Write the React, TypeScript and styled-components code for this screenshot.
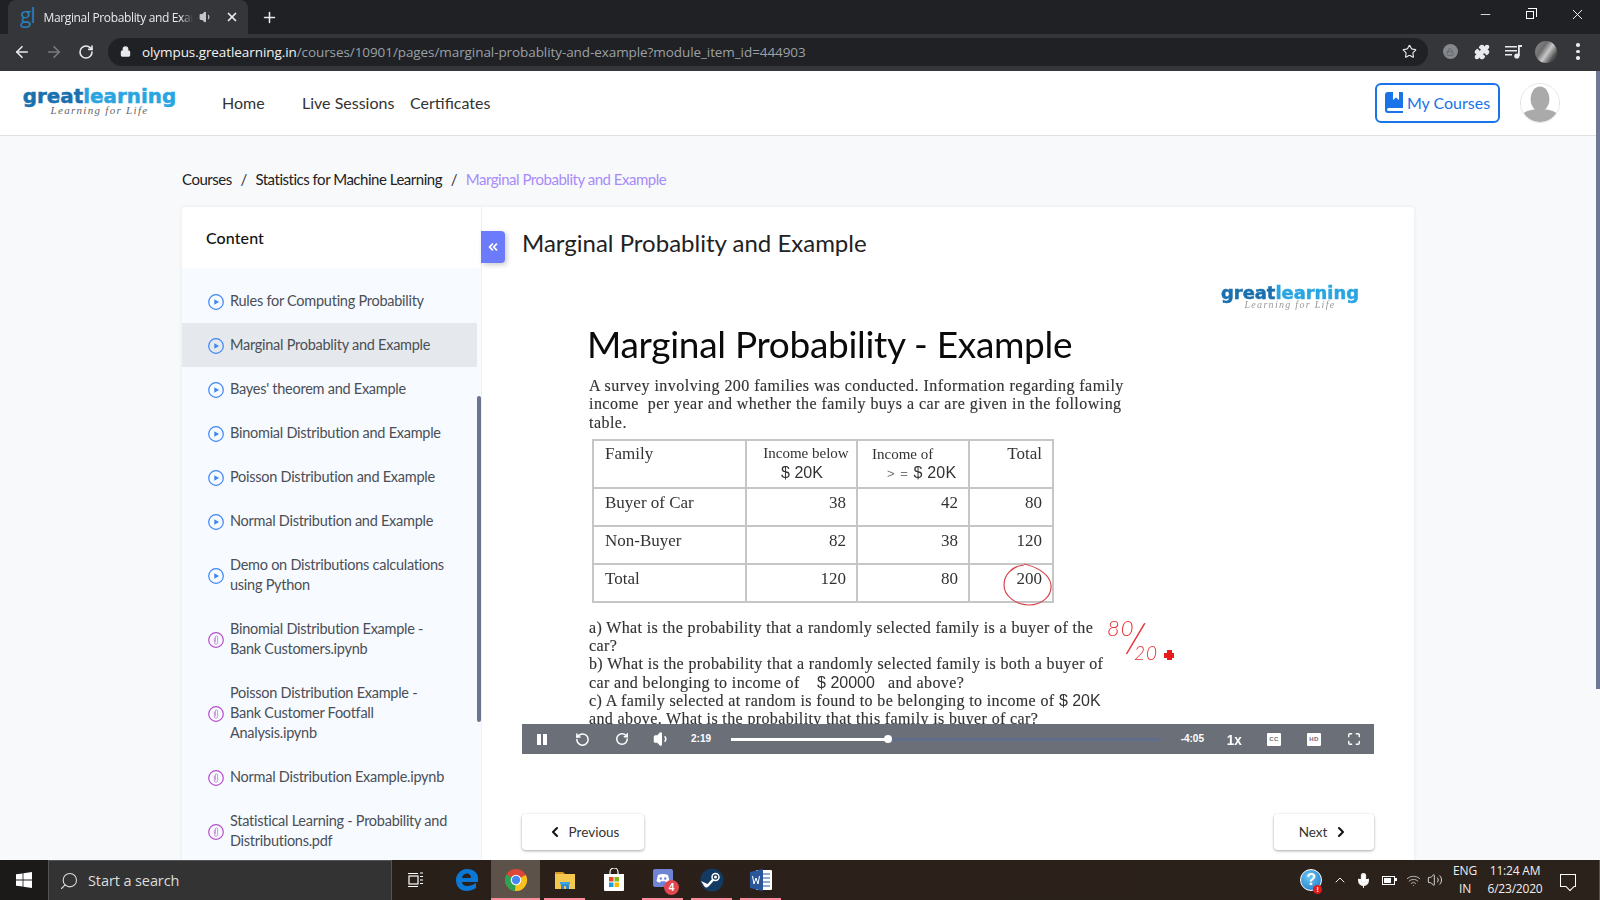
import React from 'react';
import styled, { createGlobalStyle } from 'styled-components';
import { ArrowLeft, ArrowRight, RotateCw, RotateCcw, Lock, Star, Puzzle, X, Plus, Minus, ChevronLeft, ChevronRight, ChevronsLeft, ChevronUp, Search, Mic, Volume1, Volume2, Wifi, Maximize } from 'lucide-react';

const Global = createGlobalStyle`
  html, body { margin: 0; padding: 0; width: 100%; height: 100%; overflow: hidden; }
  * { box-sizing: border-box; }
  body { font-family: Lato, "Liberation Sans", sans-serif; }
`;

const Root = styled.div`
  width: 1600px; height: 900px; display: flex; flex-direction: column; overflow: hidden; position: relative; background: #f8f9fb;
`;

/* ---------- Browser chrome ---------- */
const TabStrip = styled.div`
  height: 34px; background: #202124; display: flex; align-items: stretch; padding-left: 8px; flex: none;
`;
const Tab = styled.div`
  width: 240px; background: #35363a; border-radius: 8px 8px 0 0; display: flex; align-items: center; padding: 0 9px 0 12px; color: #e8eaed;
`;
const Favicon = styled.span`
  font: 400 21px/1 "Open Sans", sans-serif; color: #2a7fb5; width: 24px; margin-top: -3px; letter-spacing: -1px;
`;
const TabTitle = styled.span`
  font: 12px "Open Sans", sans-serif; width: 153px; white-space: nowrap; overflow: hidden; letter-spacing: -0.35px;
  -webkit-mask-image: linear-gradient(90deg, #000 92%, transparent);
`;
const TabIcons = styled.span`
  display: flex; align-items: center; gap: 12px; margin-left: 6px; color: #c4c7ca;
`;
const NewTab = styled.span`
  display: flex; align-items: center; margin-left: 13px; color: #e8eaed;
`;
const WindowControls = styled.div`
  margin-left: auto; display: flex; color: #fff;
`;
const WindowBtn = styled.span`
  width: 46px; height: 28px; display: flex; align-items: center; justify-content: center;
`;
const RestoreGlyph = styled.span`
  width: 8px; height: 8px; border: 1px solid #fff; position: relative; margin-top: 2px; margin-left: -2px;
  &::after { content: ''; position: absolute; top: -4px; right: -4px; width: 8px; height: 8px; border-top: 1px solid #fff; border-right: 1px solid #fff; }
`;
const Toolbar = styled.div`
  height: 37px; background: #35363a; display: flex; align-items: center; flex: none; padding-bottom: 2px;
`;
const ToolBtn = styled.span<{ $dim?: boolean }>`
  width: 32px; height: 32px; display: flex; align-items: center; justify-content: center; color: ${p => (p.$dim ? '#7a7c80' : '#e8eaed')};
`;
const NavBtns = styled.div`
  display: flex; padding-left: 6px; width: 108px;
`;
const UrlBar = styled.div`
  width: 1320px; height: 28px; border-radius: 14px; background: #202124; display: flex; align-items: center; padding-left: 12px; color: #e8eaed;
`;
const Url = styled.span`
  margin-left: 11px; font: 13.5px "Open Sans", sans-serif; white-space: nowrap; letter-spacing: -0.08px; color: #f1f3f4;
  & > span { color: #9aa0a6; }
`;
const UrlStar = styled.span`
  margin-left: auto; margin-right: 11px; display: flex; color: #e8eaed;
`;
const ExtIcons = styled.div`
  display: flex; margin-left: 6px;
`;
const ExtLock = styled.span`
  width: 15px; height: 15px; border-radius: 50%; background: #85888c; display: flex; align-items: center; justify-content: center; color: #5d6064;
`;
const ProfilePic = styled.span`
  width: 22px; height: 22px; border-radius: 50%; background: linear-gradient(125deg, #8c8c8c 0%, #6e6e6e 35%, #c8c8c8 55%, #4e4e4e 80%);
`;
const Dots = styled.span`
  display: flex; flex-direction: column; gap: 3px;
  & > i { width: 3.5px; height: 3.5px; border-radius: 50%; background: #e8eaed; display: block; }
`;

/* ---------- Site ---------- */
const Page = styled.div`
  flex: 1; min-height: 0; overflow: hidden; display: flex; flex-direction: column; background: #f8f9fb;
`;
const SiteNav = styled.header`
  height: 65px; flex: none; background: #fff; border-bottom: 1px solid #e0e1e3; display: flex; align-items: center; padding: 0 40px 0 24px;
`;
const Logo = styled.div<{ $small?: boolean }>`
  display: flex; flex-direction: column; align-items: center; width: ${p => (p.$small ? '136px' : '151px')}; margin-top: ${p => (p.$small ? '0' : '-2px')};
`;
const LogoWord = styled.div<{ $small?: boolean }>`
  font: 700 ${p => (p.$small ? '17.9px' : '19.9px')}/${p => (p.$small ? '12.5px' : '17px')} "DejaVu Sans", sans-serif; color: #1a70ae; white-space: nowrap; -webkit-text-stroke: .5px currentColor;
  & > span { color: #29a5e1; }
`;
const LogoTag = styled.div<{ $small?: boolean }>`
  font: italic ${p => (p.$small ? '10px' : '11px')}/${p => (p.$small ? '10px' : '11px')} "Liberation Serif", serif; color: ${p => (p.$small ? '#999' : '#666')}; letter-spacing: 1.3px; white-space: nowrap;
`;
const NavLinks = styled.nav`
  display: flex; margin: -2px 0 0 47px; font-size: 16px; color: #333;
`;
const NavLink = styled.a<{ $w: number }>`
  width: ${p => p.$w}px; white-space: nowrap;
`;
const MyCourses = styled.button`
  margin-left: auto; width: 125px; height: 40px; border: 2px solid #1a73e8; border-radius: 6px; background: #fff; color: #1a73e8; font: 16px Lato, sans-serif; display: flex; align-items: center; justify-content: center; gap: 3px; padding: 0 0 2px;
`;
const Avatar = styled.span`
  margin-left: 20px; width: 40px; height: 40px; border-radius: 50%; border: 1px solid #e3e3e3; overflow: hidden; display: block;
`;
const Breadcrumb = styled.div`
  height: 71px; flex: none; display: flex; align-items: center; padding: 15px 0 0 182px; font-size: 15px; letter-spacing: -0.48px; color: #222;
  & > i { font-style: normal; margin: 0 8.7px; color: #333; }
  & > b { font-weight: 400; color: #a78bfa; }
`;
const Card = styled.div`
  margin-left: 182px; width: 1232px; flex: none; height: 720px; background: #fff; border-radius: 4px; box-shadow: 0 0 4px rgba(0,0,0,.07); display: flex; position: relative;
`;
const Sidebar = styled.aside`
  width: 300px; flex: none; display: flex; flex-direction: column; border-right: 1px solid #eef0f3;
`;
const SideHead = styled.div`
  height: 61px; flex: none; padding: 12px 24px 0; font-size: 16px; line-height: 37px; font-weight: 500; color: #111; letter-spacing: .1px;
`;
const SideList = styled.div`
  flex: 1; background: #f7faff; padding-top: 11px; position: relative; padding-right: 4px;
`;
const SideScroll = styled.span`
  position: absolute; right: 0; top: 128px; width: 4px; height: 326px; background: #6a7590; border-radius: 2px;
`;
const SideRow = styled.div<{ $active?: boolean }>`
  display: flex; align-items: center; padding: 12px 24px 12px 26px; gap: 6px; background: ${p => (p.$active ? '#e5e8ec' : 'transparent')}; font-size: 14.5px; line-height: 20px; color: #4a4f57; letter-spacing: -0.26px;
  & > svg { flex: none; margin-top: 2px; }
`;
const Collapse = styled.span`
  position: absolute; left: 299px; top: 24px; width: 24px; height: 32px; background: #6b7bfb; border-radius: 0 4px 4px 0; box-shadow: 2px 2px 5px rgba(0,0,0,.2); color: #fff; display: flex; align-items: center; justify-content: center;
`;
const Main = styled.main`
  flex: 1; min-width: 0; padding: 0 40px;
`;
const Title = styled.h1`
  margin: 0; padding-top: 19px; font-size: 24px; line-height: 34px; font-weight: 400; color: #222; height: 63px;
`;
const Video = styled.div`
  width: 852px; height: 484px; display: flex; flex-direction: column; background: #fff; position: relative;
`;
const Slide = styled.div`
  flex: 1; min-height: 0; overflow: hidden; padding: 17px 16px 0 67px; position: relative; filter: blur(0.35px);
`;
const SlideLogoRow = styled.div`
  display: flex; justify-content: flex-end; height: 24px;
`;
const SlideTitle = styled.div`
  font: 37px/42px Lato, sans-serif; color: #0a0a0a; margin-top: 12px; letter-spacing: -0.3px; white-space: nowrap; margin-left: -2px;
`;
const SlideText = styled.div`
  margin-top: 12px; font: 16px/18.3px "Liberation Serif", serif; color: #333; letter-spacing: .46px; -webkit-text-stroke: .15px #333; white-space: nowrap;
`;
const SlideQuestions = styled(SlideText)`
  margin-top: 16px; letter-spacing: .37px;
`;
const Sans = styled.span`
  font-family: "Liberation Sans", sans-serif; letter-spacing: 0; -webkit-text-stroke: 0;
`;
const DataTable = styled.table`
  border-collapse: collapse; margin: 7px 0 0 3px; width: 460px; table-layout: fixed; font: 17px/18px "Liberation Serif", serif; color: #333;
  td { border: 2px solid #c6c6c6; padding: 4px 10px 0 11px; vertical-align: top; }
  tr:not(:first-child) td { padding-top: 5px; }
  td:not(:first-child) { text-align: right; }
`;
const HeadBelow = styled.div`
  font-size: 15px; line-height: 18px; text-align: center; white-space: nowrap; margin: -1px -10px 0 -2px;
  & > span { font: 16px "Liberation Sans", sans-serif; display: block; margin: 2px 8px 0 0; }
`;
const HeadOf = styled.div`
  font-size: 15px; line-height: 18px; text-align: left; white-space: nowrap; margin: 0 -6px 0 3px;
  & > span { font: 16px "Liberation Sans", sans-serif; display: block; margin: 1px 0 0 15px; letter-spacing: .2px; }
  & > span > em { font-style: normal; font-size: 13px; color: #777; letter-spacing: 1px; }
`;
const Row = styled.tr<{ $h: number }>`
  height: ${p => p.$h}px;
`;
const Circle = styled.svg`
  position: absolute; left: 480px; top: 293px;
`;
const Annot = styled.span<{ $x: number; $y: number; $size: number; $rot?: number }>`
  position: absolute; left: ${p => p.$x}px; top: ${p => p.$y}px; font: italic 300 ${p => p.$size}px/1 Lato, sans-serif; color: #e8353b; transform: rotate(${p => p.$rot ?? 0}deg); letter-spacing: 1px;
`;
const Cursor = styled.span`
  position: absolute; left: 642px; top: 380px; width: 10px; height: 10px; background: linear-gradient(#e81c1c,#e81c1c) center/10px 5px no-repeat, linear-gradient(#e81c1c,#e81c1c) center/5px 10px no-repeat;
`;
const Controls = styled.div`
  height: 30px; flex: none; background: #6b7078; color: #fff; display: flex; align-items: center;
`;
const Ctl = styled.span`
  width: 40px; height: 30px; display: flex; align-items: center; justify-content: center; flex: none;
`;
const PauseBars = styled.span`
  width: 10px; height: 11px; border-left: 4px solid #fff; border-right: 4px solid #fff;
`;
const Time = styled.span<{ $right?: boolean }>`
  font: 700 10px "Liberation Sans", sans-serif; width: ${p => (p.$right ? '53px' : '40px')}; margin-left: ${p => (p.$right ? '0' : '9px')}; text-align: ${p => (p.$right ? 'right' : 'left')}; padding-right: ${p => (p.$right ? '10px' : '0')}; flex: none; margin-top: -2px;
`;
const Track = styled.div`
  flex: 1; height: 3px; background: #5f6d8a; position: relative;
`;
const Played = styled.div`
  height: 3px; background: #fff; position: relative;
  &::after { content: ''; position: absolute; right: -4px; top: -2.5px; width: 8px; height: 8px; border-radius: 50%; background: #fff; }
`;
const Speed = styled.span`
  font: 700 15px "Liberation Sans", sans-serif; transform: scaleX(.9);
`;
const Badge = styled.span`
  width: 14px; height: 13px; background: #fff; border-radius: 1px; color: #6b7078; font: 700 6px/13px "Liberation Sans", sans-serif; text-align: center; letter-spacing: .5px;
`;
const Pager = styled.div`
  display: flex; justify-content: space-between; margin-top: 60px;
`;
const PageBtn = styled.button<{ $w: number }>`
  width: ${p => p.$w}px; height: 36px; background: #fff; border: 0; border-radius: 4px; box-shadow: 0 1px 3px rgba(0,0,0,.35); font: 13.5px Lato, sans-serif; color: #333; display: flex; align-items: center; justify-content: center; gap: 6px; padding: 0;
`;
const PageScroll = styled.span`
  position: absolute; right: 0; top: 71px; width: 4px; height: 618px; background: #6f7894; z-index: 3;
`;

/* ---------- Taskbar ---------- */
const Taskbar = styled.footer`
  height: 40px; flex: none; background: linear-gradient(90deg, #1b1a19 0%, #2a2019 30%, #2c221c 100%); display: flex; align-items: stretch; color: #fff; position: relative; z-index: 2;
`;
const Start = styled.span`
  width: 48px; display: flex; align-items: center; justify-content: center;
`;
const SearchBox = styled.div`
  width: 344px; background: #333; border: 1px solid #555; border-bottom: 0; display: flex; align-items: center; padding-left: 10px; gap: 9px; font: 14.5px "Open Sans", sans-serif; color: #ddd; letter-spacing: -0.1px;
`;
const TaskView = styled.span`
  width: 48px; display: flex; align-items: center; justify-content: center;
`;
const Apps = styled.div`
  display: flex; margin-left: 2px;
`;
const AppSlot = styled.span<{ $active?: boolean; $open?: boolean }>`
  width: 49px; position: relative; display: flex; align-items: center; justify-content: center; background: ${p => (p.$active ? '#5d5249' : 'transparent')};
  &::after { content: ''; position: absolute; bottom: 0; left: ${p => (p.$active ? '0' : '4px')}; right: ${p => (p.$active ? '0' : '4px')}; height: 2px; background: ${p => (p.$open ? '#ff8c9c' : 'transparent')}; }
`;
const Tray = styled.div`
  margin-left: auto; display: flex; align-items: center; padding-right: 23px;
`;
const TrayItem = styled.span<{ $w: number; $ml: number }>`
  width: ${p => p.$w}px; margin-left: ${p => p.$ml}px; display: flex; align-items: center; justify-content: center; flex-direction: column; position: relative; font: 12px/18px "Open Sans", sans-serif; color: #eee; white-space: nowrap; letter-spacing: -0.2px;
`;
const HelpBall = styled.span`
  width: 22px; height: 22px; border-radius: 50%; background: radial-gradient(circle at 40% 35%, #6cc5f2, #1576c4); border: 1px solid #fff; color: #fff; font: 700 16px/20px "Liberation Sans", sans-serif; text-align: center;
`;
const HelpDot = styled.span`
  position: absolute; right: 1px; bottom: -3px; width: 9px; height: 9px; border-radius: 50%; background: #e21c1c; color: #fff; font: 700 7px/9px "Liberation Sans", sans-serif; text-align: center;
`;
const Battery = styled.span`
  width: 13px; height: 9px; border: 1.5px solid #fff; position: relative;
  &::before { content: ''; position: absolute; left: 1px; top: 1px; bottom: 1px; width: 7px; background: #fff; }
  &::after { content: ''; position: absolute; right: -3.5px; top: 1.5px; width: 2px; height: 3px; background: #fff; }
`;
const Toast = styled.span`
  width: 16px; height: 13px; border: 1.2px solid #fff; position: relative;
  &::after { content: ''; position: absolute; right: 2px; bottom: -4px; width: 5px; height: 5px; border-right: 1.2px solid #fff; border-bottom: 1.2px solid #fff; transform: rotate(45deg); background: #2c221c; }
`;
const ShowDesktop = styled.span`
  position: absolute; right: 0; top: 0; bottom: 0; width: 1px; background: #5a5048;
`;
const DiscordBadge = styled.span`
  position: absolute; left: 26px; top: 20px; width: 15px; height: 15px; border-radius: 50%; background: #e2474d; color: #fff; font: 700 10px/15px "Liberation Sans", sans-serif; text-align: center;
`;

/* ---------- drawings ---------- */
const PlayIcon = () => (
  <svg width="16" height="16" viewBox="0 0 16 16"><circle cx="8" cy="8" r="7.3" fill="none" stroke="#3b86f2" strokeWidth="1.2" /><path d="M6.3 5.3 L11 8 L6.3 10.7Z" fill="#3b86f2" /></svg>
);
const ClipIcon = () => (
  <svg width="16" height="16" viewBox="0 0 16 16"><circle cx="8" cy="8" r="7.3" fill="none" stroke="#b64fc8" strokeWidth="1.2" /><path d="M6.4 5.6v5a1.6 1.6 0 0 0 3.2 0V5a1.1 1.1 0 0 0-2.2 0v5.2" fill="none" stroke="#c98ad6" strokeWidth=".9" /></svg>
);
const BookIcon = () => (
  <svg width="19" height="21" viewBox="0 0 19 21"><path d="M3 0h5v8l3-2.500L14 8V0h3a1 1 0 0 1 1 1v15H3.500a1.500 1.500 0 0 0 0 3H18v2H3a3 3 0 0 1-3-3V3a3 3 0 0 1 3-3Z" fill="#1a73e8" /></svg>
);
const WinLogo = () => (
  <svg width="16" height="16" viewBox="0 0 16 16" fill="#fff"><path d="M0 2.3 6.6 1.4V7.6H0ZM7.4 1.3 16 0V7.6H7.4ZM0 8.4H6.6V14.6L0 13.7ZM7.4 8.4H16V16L7.4 14.7Z" /></svg>
);
const TaskViewIcon = () => (
  <svg width="16" height="16" viewBox="0 0 16 16" fill="none" stroke="#fff" strokeWidth="1.2"><rect x="1" y="4" width="9" height="8" /><path d="M0 1.5h10M0 14.5h10M12 1h3M12 4.5h3M12 8h3M12 11.5h3" /></svg>
);
const EdgeIcon = () => (
  <svg width="24" height="24" viewBox="0 0 24 24"><path d="M12 1C5 1 1 7 1 12c0 7 5 11 10 11 4 0 7-1 10-3v-5c-3 2-6 3-9 3-3 0-5-2-5-4h16c1-8-3-13-11-13Zm-5 9c.5-3 2.500-4.500 5-4.500s4 1.500 4 4.500Z" fill="#0a78d4" /></svg>
);
const ChromeIcon = () => (
  <svg width="24" height="24" viewBox="0 0 24 24"><circle cx="12" cy="12" r="11" fill="#de4637" /><path d="M12 12 2.500 6.500A11 11 0 0 0 11 23Z" fill="#2fa24f" /><path d="M12 12 21.800 7A11 11 0 0 1 11 23Z" fill="#f6c31c" /><circle cx="12" cy="12" r="5.300" fill="#fff" /><circle cx="12" cy="12" r="4.200" fill="#4688f1" /></svg>
);
const FolderIcon = () => (
  <svg width="22" height="22" viewBox="0 0 22 22"><path d="M1 3h8l2 2H1Z" fill="#d99a1e" /><rect x="1" y="5" width="20" height="15" fill="#f4c74f" /><path d="M7 20v-5h8v5h-3v-3h-2v3Z" fill="#2f86c9" /><rect x="6" y="13" width="10" height="2.500" fill="#3aa3e3" /></svg>
);
const StoreIcon = () => (
  <svg width="22" height="24" viewBox="0 0 22 24"><path d="M7 7V4a4 4 0 0 1 8 0v3" fill="none" stroke="#fff" strokeWidth="1.200" /><path d="M1 6h20v16a1 1 0 0 1-1 1H2a1 1 0 0 1-1-1Z" fill="#fff" /><rect x="6" y="9" width="4.500" height="4.500" fill="#ea4a1f" /><rect x="11.500" y="9" width="4.500" height="4.500" fill="#7db81f" /><rect x="6" y="14.500" width="4.500" height="4.500" fill="#1ba1e2" /><rect x="11.500" y="14.500" width="4.500" height="4.500" fill="#fbb900" /></svg>
);
const DiscordIcon = () => (
  <svg width="22" height="24" viewBox="0 0 22 24"><path d="M3 1h16a2 2 0 0 1 2 2v19l-5-3H3a2 2 0 0 1-2-2V3a2 2 0 0 1 2-2Z" fill="#6f84d4" /><path d="M6 7c3-1.500 7-1.500 10 0l1.500 6c-1 1-2.500 1.500-3.500 1.500l-.8-1.200H9l-.8 1.200C7 14.500 5.500 14 4.500 13Z" fill="#fff" /><circle cx="8.800" cy="10.500" r="1.200" fill="#6f84d4" /><circle cx="13.200" cy="10.500" r="1.200" fill="#6f84d4" /></svg>
);
const SteamIcon = () => (
  <svg width="24" height="24" viewBox="0 0 24 24"><circle cx="12" cy="12" r="11.500" fill="#123a63" /><circle cx="15.500" cy="9" r="3.500" fill="none" stroke="#fff" strokeWidth="1.500" /><circle cx="15.500" cy="9" r="1.500" fill="#fff" /><path d="M1 13l6.500 3 5-5.500 1.500 2-5 5.500a3 3 0 0 1-5.500-1Z" fill="#fff" /></svg>
);
const WordIcon = () => (
  <svg width="24" height="24" viewBox="0 0 24 24"><rect x="7" y="2" width="16" height="20" rx="1" fill="#fff" /><path d="M13 6h8M13 10h8M13 14h8M13 18h8" stroke="#2b579a" /><path d="M1 4 14 1v22L1 20Z" fill="#2b579a" /><path d="M3.500 8l1.500 8 2-6 2 6 1.500-8" fill="none" stroke="#fff" strokeWidth="1" /></svg>
);
const MusicQueue = () => (
  <svg width="18" height="14" viewBox="0 0 18 14" fill="#e8eaed"><rect x="0" y="1" width="12" height="1.500" /><rect x="0" y="5" width="12" height="1.500" /><rect x="0" y="9" width="7" height="1.500" /><rect x="13" y="1" width="1.800" height="10" /><rect x="13" y="0" width="4" height="2" /><circle cx="11.800" cy="11" r="2.600" /></svg>
);
const PersonPic = () => (
  <svg width="38" height="38" viewBox="0 0 38 38"><rect width="38" height="38" fill="#fff" /><ellipse cx="19" cy="15" rx="9.500" ry="12.500" fill="#aaa" /><path d="M0 31c4-4 11-6 19-6s15 2 19 6v7H0Z" fill="#aaa" /></svg>
);
const GreatLogo = ({ small }: { small?: boolean }) => (
  <Logo $small={small}>
    <LogoWord $small={small}>great<span>learning</span></LogoWord>
    <LogoTag $small={small}>Learning for Life</LogoTag>
  </Logo>
);

const items: { t: React.ReactNode; clip?: boolean; active?: boolean }[] = [
  { t: 'Rules for Computing Probability' },
  { t: 'Marginal Probablity and Example', active: true },
  { t: "Bayes' theorem and Example" },
  { t: 'Binomial Distribution and Example' },
  { t: 'Poisson Distribution and Example' },
  { t: 'Normal Distribution and Example' },
  { t: <>Demo on Distributions calculations<br />using Python</> },
  { t: <>Binomial Distribution Example -<br />Bank Customers.ipynb</>, clip: true },
  { t: <>Poisson Distribution Example -<br />Bank Customer Footfall<br />Analysis.ipynb</>, clip: true },
  { t: 'Normal Distribution Example.ipynb', clip: true },
  { t: <>Statistical Learning - Probability and<br />Distributions.pdf</>, clip: true },
];

const tray = [
  { w: 16, ml: 9, el: <ChevronUp size={16} strokeWidth={1.5} /> },
  { w: 20, ml: 5, el: <Mic size={17} fill="#fff" strokeWidth={1.5} /> },
  { w: 20, ml: 5, el: <Battery /> },
  { w: 20, ml: 5, el: <Wifi size={15} strokeWidth={1.5} color="#bbb" /> },
  { w: 20, ml: 2, el: <Volume2 size={16} strokeWidth={1.3} /> },
];

export default function App() {
  return (
    <Root>
      <Global />
      <TabStrip>
        <Tab>
          <Favicon>gl</Favicon>
          <TabTitle>Marginal Probablity and Exam</TabTitle>
          <TabIcons>
            <Volume1 size={14} fill="#c4c7ca" />
            <X size={14} strokeWidth={3} color="#e8eaed" />
          </TabIcons>
        </Tab>
        <NewTab><Plus size={17} strokeWidth={2.2} /></NewTab>
        <WindowControls>
          <WindowBtn><Minus size={15} strokeWidth={1.3} /></WindowBtn>
          <WindowBtn><RestoreGlyph /></WindowBtn>
          <WindowBtn><X size={17} strokeWidth={1.3} /></WindowBtn>
        </WindowControls>
      </TabStrip>
      <Toolbar>
        <NavBtns>
          <ToolBtn><ArrowLeft size={18} strokeWidth={2.2} /></ToolBtn>
          <ToolBtn $dim><ArrowRight size={18} strokeWidth={2.2} /></ToolBtn>
          <ToolBtn><RotateCw size={16} strokeWidth={2.4} /></ToolBtn>
        </NavBtns>
        <UrlBar>
          <Lock size={11} fill="#e8eaed" strokeWidth={2.5} />
          <Url>olympus.greatlearning.in<span>/courses/10901/pages/marginal-probablity-and-example?module_item_id=444903</span></Url>
          <UrlStar><Star size={15} strokeWidth={1.8} /></UrlStar>
        </UrlBar>
        <ExtIcons>
          <ToolBtn><ExtLock><Lock size={8} strokeWidth={2} /></ExtLock></ToolBtn>
          <ToolBtn><Puzzle size={16} fill="#e8eaed" /></ToolBtn>
          <ToolBtn><MusicQueue /></ToolBtn>
          <ToolBtn><ProfilePic /></ToolBtn>
          <ToolBtn><Dots><i /><i /><i /></Dots></ToolBtn>
        </ExtIcons>
      </Toolbar>
      <Page>
        <SiteNav>
          <GreatLogo />
          <NavLinks>
            <NavLink $w={80}>Home</NavLink>
            <NavLink $w={108}>Live Sessions</NavLink>
            <NavLink $w={90}>Certificates</NavLink>
          </NavLinks>
          <MyCourses><BookIcon />My Courses</MyCourses>
          <Avatar><PersonPic /></Avatar>
        </SiteNav>
        <Breadcrumb>Courses<i>/</i>Statistics for Machine Learning<i>/</i><b>Marginal Probablity and Example</b></Breadcrumb>
        <Card>
          <Sidebar>
            <SideHead>Content</SideHead>
            <SideList>
              {items.map((it, i) => (
                <SideRow key={i} $active={it.active}>
                  {it.clip ? <ClipIcon /> : <PlayIcon />}
                  <span>{it.t}</span>
                </SideRow>
              ))}
              <SideScroll />
            </SideList>
          </Sidebar>
          <Collapse><ChevronsLeft size={14} strokeWidth={3} /></Collapse>
          <Main>
            <Title>Marginal Probablity and Example</Title>
            <Video>
              <Slide>
                <SlideLogoRow><GreatLogo small /></SlideLogoRow>
                <SlideTitle>Marginal Probability - Example</SlideTitle>
                <SlideText>
                  A survey involving 200 families was conducted. Information regarding family<br />
                  income&nbsp; per year and whether the family buys a car are given in the following<br />
                  table.
                </SlideText>
                <DataTable>
                  <colgroup><col width="153" /><col width="111" /><col width="112" /><col width="84" /></colgroup>
                  <tbody>
                    <Row $h={48}>
                      <td>Family</td>
                      <td><HeadBelow>Income below<span>$ 20K</span></HeadBelow></td>
                      <td><HeadOf>Income of<span><em>&gt; =</em> $ 20K</span></HeadOf></td>
                      <td>Total</td>
                    </Row>
                    <Row $h={38}><td>Buyer of Car</td><td>38</td><td>42</td><td>80</td></Row>
                    <Row $h={38}><td>Non-Buyer</td><td>82</td><td>38</td><td>120</td></Row>
                    <Row $h={38}><td>Total</td><td>120</td><td>80</td><td>200</td></Row>
                  </tbody>
                </DataTable>
                <SlideQuestions>
                  a) What is the probability that a randomly selected family is a buyer of the<br />
                  car?<br />
                  b) What is the probability that a randomly selected family is both a buyer of<br />
                  car and belonging to income of &nbsp;&nbsp;&nbsp;<Sans>$ 20000</Sans> &nbsp;&nbsp;and above?<br />
                  c) A family selected at random is found to be belonging to income of <Sans>$ 20K</Sans><br />
                  and above. What is the probability that this family is buyer of car?
                </SlideQuestions>
                <Circle width="52" height="44" viewBox="0 0 52 44"><path d="M22 2C10 3 2 12 2 22c0 11 12 20 25 20 13 0 23-9 22-20C48 12 36 4 22 1" fill="none" stroke="#d8434a" strokeWidth="1.2" /></Circle>
                <Annot $x={585} $y={347} $size={22}>80</Annot>
                <Annot $x={605} $y={346} $size={42} $rot={4}>/</Annot>
                <Annot $x={612} $y={373} $size={19}>20</Annot>
                <Cursor />
              </Slide>
              <Controls>
                <Ctl><PauseBars /></Ctl>
                <Ctl><RotateCcw size={15} strokeWidth={2.4} /></Ctl>
                <Ctl><RotateCw size={14} strokeWidth={2.6} /></Ctl>
                <Ctl><Volume1 size={18} fill="#fff" strokeWidth={2} /></Ctl>
                <Time>2:19</Time>
                <Track><Played style={{ width: `${(157 / 430) * 100}%` }} /></Track>
                <Time $right>-4:05</Time>
                <Ctl><Speed>1x</Speed></Ctl>
                <Ctl><Badge>CC</Badge></Ctl>
                <Ctl><Badge>HD</Badge></Ctl>
                <Ctl><Maximize size={14} strokeWidth={2.4} /></Ctl>
              </Controls>
            </Video>
            <Pager>
              <PageBtn $w={122}><ChevronLeft size={16} strokeWidth={3} color="#111" />Previous</PageBtn>
              <PageBtn $w={100}>Next<ChevronRight size={16} strokeWidth={3} color="#111" /></PageBtn>
            </Pager>
          </Main>
        </Card>
      </Page>
      <PageScroll />
      <Taskbar>
        <Start><WinLogo /></Start>
        <SearchBox><Search size={20} strokeWidth={1.3} style={{ transform: 'scaleX(-1)' }} />Start a search</SearchBox>
        <TaskView><TaskViewIcon /></TaskView>
        <Apps>
          <AppSlot><EdgeIcon /></AppSlot>
          <AppSlot $active $open><ChromeIcon /></AppSlot>
          <AppSlot $open><FolderIcon /></AppSlot>
          <AppSlot><StoreIcon /></AppSlot>
          <AppSlot $open><DiscordIcon /><DiscordBadge>4</DiscordBadge></AppSlot>
          <AppSlot $open><SteamIcon /></AppSlot>
          <AppSlot $open><WordIcon /></AppSlot>
        </Apps>
        <Tray>
          <TrayItem $w={24} $ml={0}><HelpBall>?</HelpBall><HelpDot>!</HelpDot></TrayItem>
          {tray.map((t, i) => <TrayItem key={i} $w={t.w} $ml={t.ml}>{t.el}</TrayItem>)}
          <TrayItem $w={30} $ml={5}><span>ENG</span><span>IN</span></TrayItem>
          <TrayItem $w={60} $ml={5}><span>11:24 AM</span><span>6/23/2020</span></TrayItem>
          <TrayItem $w={18} $ml={14}><Toast /></TrayItem>
        </Tray>
        <ShowDesktop />
      </Taskbar>
    </Root>
  );
}
